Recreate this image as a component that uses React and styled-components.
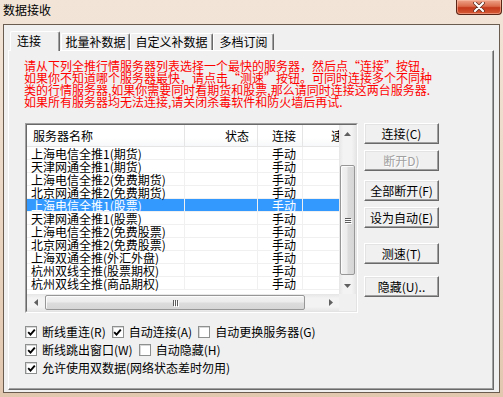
import React from "react";
import styled, { createGlobalStyle } from "styled-components";

const GlobalStyle = createGlobalStyle`
  html, body { margin: 0; padding: 0; }
  body {
    width: 503px;
    height: 397px;
    overflow: hidden;
    font-family: "Noto Sans CJK SC", "Liberation Sans", sans-serif;
    font-size: 12px;
    color: #000;
    background: #e8d6c4;
  }
`;

const FONT = `"Noto Sans CJK SC", "Liberation Sans", sans-serif`;

const Frame = styled.div`
  width: 503px;
  height: 397px;
  box-sizing: border-box;
  display: flex;
  flex-direction: column;
  padding: 0 3px 4px 3px;
  background: linear-gradient(180deg, #f2e5d8 0%, #ecd9c7 45%, #e2c7af 100%);
`;

const TitleBar = styled.div`
  height: 24px;
  display: flex;
  align-items: flex-start;
  justify-content: space-between;
`;

const Title = styled.div`
  padding-top: 3px;
  line-height: 14px;
  font-size: 12px;
`;

const CloseButton = styled.div`
  width: 46px;
  height: 15px;
  margin-right: -2px;
  box-sizing: border-box;
  border: 1px solid #5a2416;
  border-top: none;
  border-radius: 0 0 4px 4px;
  background: linear-gradient(180deg, #eea38a 0%, #db6b4b 45%, #c4391b 55%, #d45a36 100%);
  display: flex;
  align-items: center;
  justify-content: center;
  box-shadow: inset 0 0 0 1px rgba(255, 200, 180, 0.5);
`;

const Client = styled.div`
  flex: 1;
  display: flex;
  flex-direction: column;
  border: 1px solid #6a5c4f;
  background: #f0f0f0;
  padding: 6px 5px 2px 4px;
`;

const TabStrip = styled.div`
  height: 19px;
  display: flex;
  align-items: flex-end;
  padding-left: 2px;
`;

const Tab = styled.div`
  position: relative;
  box-sizing: border-box;
  width: ${(p) => p.$w}px;
  height: ${(p) => (p.$active ? 20 : 17)}px;
  margin-bottom: ${(p) => (p.$active ? -1 : 0)}px;
  margin-right: ${(p) => (p.$active ? 1 : 0)}px;
  z-index: ${(p) => (p.$active ? 2 : 1)};
  background: #f0f0f0;
  border-top: 1px solid #fff;
  border-left: 1px solid #fff;
  border-right: 1px solid #696969;
  border-radius: 2px 2px 0 0;
  box-shadow: inset -1px 0 #a0a0a0;
  line-height: ${(p) => (p.$active ? 18 : 16)}px;
  text-align: ${(p) => (p.$active ? "left" : "center")};
  padding-left: ${(p) => (p.$active ? 6 : 0)}px;
  white-space: nowrap;
`;

const Panel = styled.div`
  flex: 1;
  display: flex;
  flex-direction: column;
  border-top: 1px solid #fff;
  border-left: 1px solid #fff;
  border-right: 1px solid #696969;
  border-bottom: 1px solid #696969;
  box-shadow: inset -1px -1px #a0a0a0;
  padding: 9px 15px 0 15px;
`;

const Notice = styled.div`
  color: #ff0000;
  line-height: 12px;
  white-space: nowrap;
`;

const MainRow = styled.div`
  display: flex;
  align-items: flex-start;
  gap: 6px;
  margin: 15px 0 0 1px;
`;

const ListOuter = styled.div`
  width: 333px;
  height: 190px;
  box-sizing: border-box;
  border: 1px solid;
  border-color: #a0a0a0 #ffffff #ffffff #a0a0a0;
`;

const ListInner = styled.div`
  height: 100%;
  box-sizing: border-box;
  border: 1px solid;
  border-color: #696969 #e3e3e3 #e3e3e3 #696969;
  background: #fff;
  display: grid;
  grid-template-columns: 1fr 17px;
  grid-template-rows: 1fr 17px;
`;

const Viewport = styled.div`
  overflow: hidden;
`;

const HeaderRow = styled.div`
  display: flex;
  height: 22px;
  box-sizing: border-box;
  border-bottom: 1px solid #e5e5e5;
  background: linear-gradient(180deg, #ffffff 0%, #ffffff 60%, #f7f8f9 100%);
`;

const HeaderCell = styled.div`
  flex: 0 0 ${(p) => p.$w}px;
  box-sizing: border-box;
  border-right: 1px solid #e5e5e5;
  line-height: 21px;
  text-align: ${(p) => p.$align || "left"};
  padding-left: ${(p) => p.$pl || 0}px;
  padding-right: ${(p) => p.$pr || 0}px;
  white-space: nowrap;
  overflow: hidden;
`;

const Row = styled.div`
  display: flex;
  height: 13px;
  box-sizing: border-box;
  border-bottom: 1px solid #f0f0f0;
  background: ${(p) => (p.$selected ? "#3399ff" : "transparent")};
  color: ${(p) => (p.$selected ? "#fff" : "#000")};
`;

const Cell = styled.div`
  flex: 0 0 ${(p) => p.$w}px;
  box-sizing: border-box;
  border-right: 1px solid #f0f0f0;
  line-height: 14px;
  padding-left: ${(p) => p.$pl || 0}px;
  white-space: nowrap;
`;

const VScroll = styled.div`
  display: flex;
  flex-direction: column;
  background: linear-gradient(90deg, #e6e6e6 0%, #f3f3f3 25%, #f3f3f3 75%, #e6e6e6 100%);
`;

const HScroll = styled.div`
  display: flex;
  background: linear-gradient(180deg, #e6e6e6 0%, #f3f3f3 25%, #f3f3f3 75%, #e6e6e6 100%);
`;

const ArrowBox = styled.div`
  flex: 0 0 17px;
  height: 17px;
  display: flex;
  align-items: center;
  justify-content: center;
`;

const VTrack = styled.div`
  flex: 1;
  padding-top: 23px;
`;

const HTrack = styled.div`
  flex: 1;
  padding-left: 1px;
  display: flex;
`;

const Thumb = styled.div`
  box-sizing: border-box;
  border: 1px solid #979797;
  border-radius: 2px;
  display: flex;
  align-items: center;
  justify-content: center;
  ${(p) =>
    p.$vertical
      ? `width: 15px; height: 110px; margin-left: 1px;
         background: linear-gradient(90deg, #f2f2f2 0%, #ececec 45%, #dcdcdc 55%, #d6d6d6 100%);
         flex-direction: column; gap: 1px;`
      : `width: 260px; height: 15px; margin-top: 1px;
         background: linear-gradient(180deg, #f2f2f2 0%, #ececec 45%, #dcdcdc 55%, #d6d6d6 100%);
         gap: 1px;`}
  box-shadow: inset 1px 1px rgba(255, 255, 255, 0.8);
`;

const Grip = styled.span`
  background: #5c5c5c;
  box-shadow: 1px 1px 0 #fff;
  ${(p) => (p.$vertical ? "width: 6px; height: 1px;" : "width: 1px; height: 6px;")}
`;

const Corner = styled.div`
  background: #f0f0f0;
`;

const ButtonColumn = styled.div`
  display: flex;
  flex-direction: column;
  width: 75px;
`;

const Button = styled.div`
  height: 21px;
  box-sizing: border-box;
  margin-top: ${(p) => p.$top || 0}px;
  background: #f0f0f0;
  border: 1px solid;
  border-color: #ffffff #696969 #696969 #ffffff;
  box-shadow: inset -1px -1px #a0a0a0, inset 1px 1px #e3e3e3;
  text-align: center;
  line-height: 19px;
  white-space: nowrap;
  color: ${(p) => (p.$disabled ? "#a0a0a0" : "#000")};
  text-shadow: ${(p) => (p.$disabled ? "1px 1px 0 #fff" : "none")};
`;

const CheckList = styled.div`
  margin: 10px 0 0 1px;
  display: flex;
  flex-direction: column;
`;

const CheckRow = styled.div`
  height: 18px;
  display: flex;
  align-items: center;
`;

const CheckItem = styled.label`
  display: flex;
  align-items: center;
  gap: 5px;
  margin-right: 6px;
  line-height: 14px;
  white-space: nowrap;
`;

const Box = styled.span`
  width: 12px;
  height: 12px;
  box-sizing: border-box;
  border: 1px solid #8e8f8f;
  background: #fff;
  box-shadow: inset 1px 1px #d8d8d8;
  display: flex;
  align-items: center;
  justify-content: center;
`;

const Label = styled.span`
  font-family: ${FONT};
`;

function CheckBox({ checked, label }) {
  return (
    <CheckItem>
      <Box>
        {checked && (
          <svg width="9" height="9" viewBox="0 0 9 9">
            <path d="M1.2 4.2 L3.5 6.6 L7.8 1.6" fill="none" stroke="#000" strokeWidth="1.9" />
          </svg>
        )}
      </Box>
      <Label>{label}</Label>
    </CheckItem>
  );
}

function Arrow({ dir }) {
  const pts = {
    up: "0,4 3.5,0 7,4",
    down: "0,0 3.5,4 7,0",
    left: "4,0 0,3.5 4,7",
    right: "0,0 4,3.5 0,7",
  }[dir];
  const vertical = dir === "up" || dir === "down";
  return (
    <ArrowBox>
      <svg width={vertical ? 7 : 4} height={vertical ? 4 : 7} viewBox={vertical ? "0 0 7 4" : "0 0 4 7"}>
        <polygon points={pts} fill="#606060" />
      </svg>
    </ArrowBox>
  );
}

const tabs = [
  { name: "连接", w: 50, active: true },
  { name: "批量补数据", w: 69 },
  { name: "自定义补数据", w: 83 },
  { name: "多档订阅", w: 61 },
];

const servers = [
  "上海电信全推1(期货)",
  "天津网通全推1(期货)",
  "上海电信全推2(免费期货)",
  "北京网通全推2(免费期货)",
  "上海电信全推1(股票)",
  "天津网通全推1(股票)",
  "上海电信全推2(免费股票)",
  "北京网通全推2(免费股票)",
  "上海双通全推(外汇外盘)",
  "杭州双线全推(股票期权)",
  "杭州双线全推(商品期权)",
];

const cols = [158, 73, 45, 80];

const buttons = [
  { label: "连接(C)", top: 0 },
  { label: "断开D)", top: 6, disabled: true },
  { label: "全部断开(F)", top: 9 },
  { label: "设为自动(E)", top: 6 },
  { label: "测速(T)", top: 15 },
  { label: "隐藏(U)..", top: 12 },
];

export default function App() {
  return (
    <>
      <GlobalStyle />
      <Frame>
        <TitleBar>
          <Title>数据接收</Title>
          <CloseButton>
            <svg width="12" height="10" viewBox="0 0 12 10">
              <path d="M2 1 L10 9 M10 1 L2 9" stroke="#5a2a1e" strokeWidth="3.6" strokeLinecap="round" />
              <path d="M2 1 L10 9 M10 1 L2 9" stroke="#ffffff" strokeWidth="2.2" strokeLinecap="round" />
            </svg>
          </CloseButton>
        </TitleBar>
        <Client>
          <TabStrip>
            {tabs.map((t) => (
              <Tab key={t.name} $w={t.w} $active={t.active}>
                {t.name}
              </Tab>
            ))}
          </TabStrip>
          <Panel>
            <Notice>请从下列全推行情服务器列表选择一个最快的服务器，然后点“连接”按钮，</Notice>
            <Notice>如果你不知道哪个服务器最快，请点击“测速”按钮。可同时连接多个不同种</Notice>
            <Notice>类的行情服务器,如果你需要同时看期货和股票,那么请同时连接这两台服务器.</Notice>
            <Notice>如果所有服务器均无法连接,请关闭杀毒软件和防火墙后再试.</Notice>

            <MainRow>
              <ListOuter>
                <ListInner>
                  <Viewport>
                    <HeaderRow>
                      <HeaderCell $w={cols[0]} $pl={6}>服务器名称</HeaderCell>
                      <HeaderCell $w={cols[1]} $align="right" $pr={8}>状态</HeaderCell>
                      <HeaderCell $w={cols[2]} $pl={14}>连接</HeaderCell>
                      <HeaderCell $w={cols[3]} $pl={28}>速度</HeaderCell>
                    </HeaderRow>
                    {servers.map((s, i) => (
                      <Row key={s} $selected={i === 4}>
                        <Cell $w={cols[0]} $pl={4}>{s}</Cell>
                        <Cell $w={cols[1]} />
                        <Cell $w={cols[2]} $pl={14}>手动</Cell>
                        <Cell $w={cols[3]} />
                      </Row>
                    ))}
                  </Viewport>
                  <VScroll>
                    <Arrow dir="up" />
                    <VTrack>
                      <Thumb $vertical>
                        <Grip $vertical />
                        <Grip $vertical />
                        <Grip $vertical />
                      </Thumb>
                    </VTrack>
                    <Arrow dir="down" />
                  </VScroll>
                  <HScroll>
                    <Arrow dir="left" />
                    <HTrack>
                      <Thumb>
                        <Grip />
                        <Grip />
                        <Grip />
                      </Thumb>
                    </HTrack>
                    <Arrow dir="right" />
                  </HScroll>
                  <Corner />
                </ListInner>
              </ListOuter>
              <ButtonColumn>
                {buttons.map((b) => (
                  <Button key={b.label} $top={b.top} $disabled={b.disabled}>
                    {b.label}
                  </Button>
                ))}
              </ButtonColumn>
            </MainRow>

            <CheckList>
              <CheckRow>
                <CheckBox checked label="断线重连(R)" />
                <CheckBox checked label="自动连接(A)" />
                <CheckBox label="自动更换服务器(G)" />
              </CheckRow>
              <CheckRow>
                <CheckBox checked label="断线跳出窗口(W)" />
                <CheckBox label="自动隐藏(H)" />
              </CheckRow>
              <CheckRow>
                <CheckBox checked label="允许使用双数据(网络状态差时勿用)" />
              </CheckRow>
            </CheckList>
          </Panel>
        </Client>
      </Frame>
    </>
  );
}
